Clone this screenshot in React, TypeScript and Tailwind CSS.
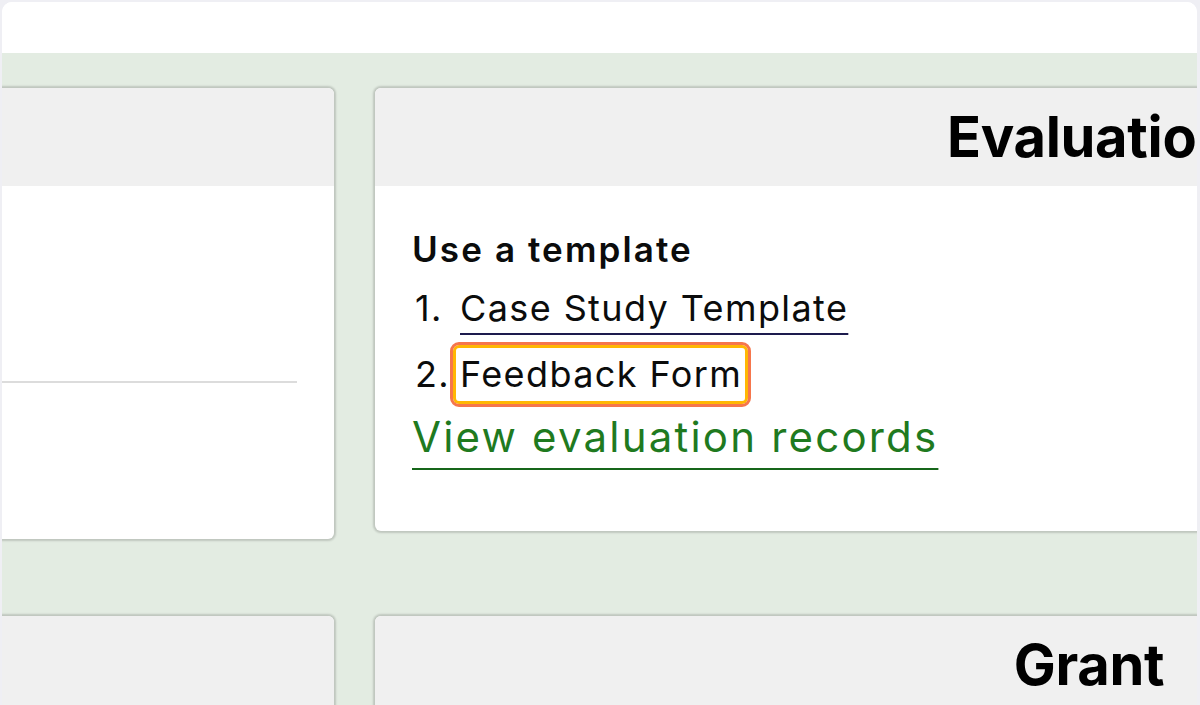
import React from "react";

const font = { fontFamily: "Inter, 'Noto Sans', sans-serif" };

function Card({
  title,
  children,
  className,
}: {
  title?: string;
  children?: React.ReactNode;
  className?: string;
}) {
  return (
    <div
      className={
        "w-[1428px] shrink-0 rounded-[6px] bg-white overflow-hidden shadow-[0_0_2px_2px_rgba(0,0,0,0.16)] " +
        (className ?? "")
      }
    >
      <div className="h-[98px] bg-[#f0f0f0] flex items-center justify-center">
        {title ? (
          <h2 className="text-[56px] font-bold leading-none text-black tracking-[-0.3px]">{title}</h2>
        ) : null}
      </div>
      {children}
    </div>
  );
}

export default function App() {
  return (
    <div className="w-[1200px] h-[705px] bg-[#efeff4] pt-[2px] pl-[2px] pr-[3px] overflow-hidden" style={font}>
      <div className="h-full bg-white rounded-t-[10px] overflow-hidden flex flex-col">
        <div className="h-[51px] shrink-0 bg-white" />
        <div className="flex-1 bg-[#e3ece2] overflow-hidden">
          <div className="ml-[-1096px] pt-[35px] flex flex-col gap-[77px]">
            <div className="flex items-start gap-[41px]">
              <Card className="h-[451px]">
                <div className="px-[37px] pt-[195px]">
                  <div className="h-[2px] bg-[#dcdcdc]" />
                </div>
              </Card>
              <Card title="Evaluation" className="h-[443px]">
                <div className="pl-[37px] pt-[43px]">
                  <p className="text-[35px] font-semibold leading-[40px] tracking-[2.1px] text-[#0b0c0c]">
                    Use a template
                  </p>
                  <div className="mt-[15px] flex items-baseline text-[36px] leading-[48px] tracking-[1.4px] text-[#0b0c0c]">
                    <span className="w-[48px] shrink-0 pl-[3px]">1.</span>
                    <a className="underline decoration-[2px] underline-offset-[12px] decoration-[#1d1b4d]">
                      Case Study Template
                    </a>
                  </div>
                  <div className="mt-[10px] flex items-baseline text-[36px] leading-[49px] tracking-[1.4px] text-[#0b0c0c]">
                    <span className="w-[38px] shrink-0 pl-[3px]">2.</span>
                    <a className="inline-block pl-[7px] pr-[6px] py-[5px] rounded-[9px] border-[3px] border-[#f6764c] shadow-[inset_0_0_0_3px_#ffb703]">
                      Feedback Form
                    </a>
                  </div>
                  <a className="block mt-[4px] w-fit text-[42px] leading-[52px] tracking-[2.2px] text-[#1f7a1f] underline decoration-[2px] underline-offset-[16px] decoration-[#16661a]">
                    View evaluation records
                  </a>
                </div>
              </Card>
            </div>
            <div className="flex items-start gap-[41px]">
              <Card className="h-[300px]" />
              <Card title="Grant" className="h-[300px]" />
            </div>
          </div>
        </div>
      </div>
    </div>
  );
}
